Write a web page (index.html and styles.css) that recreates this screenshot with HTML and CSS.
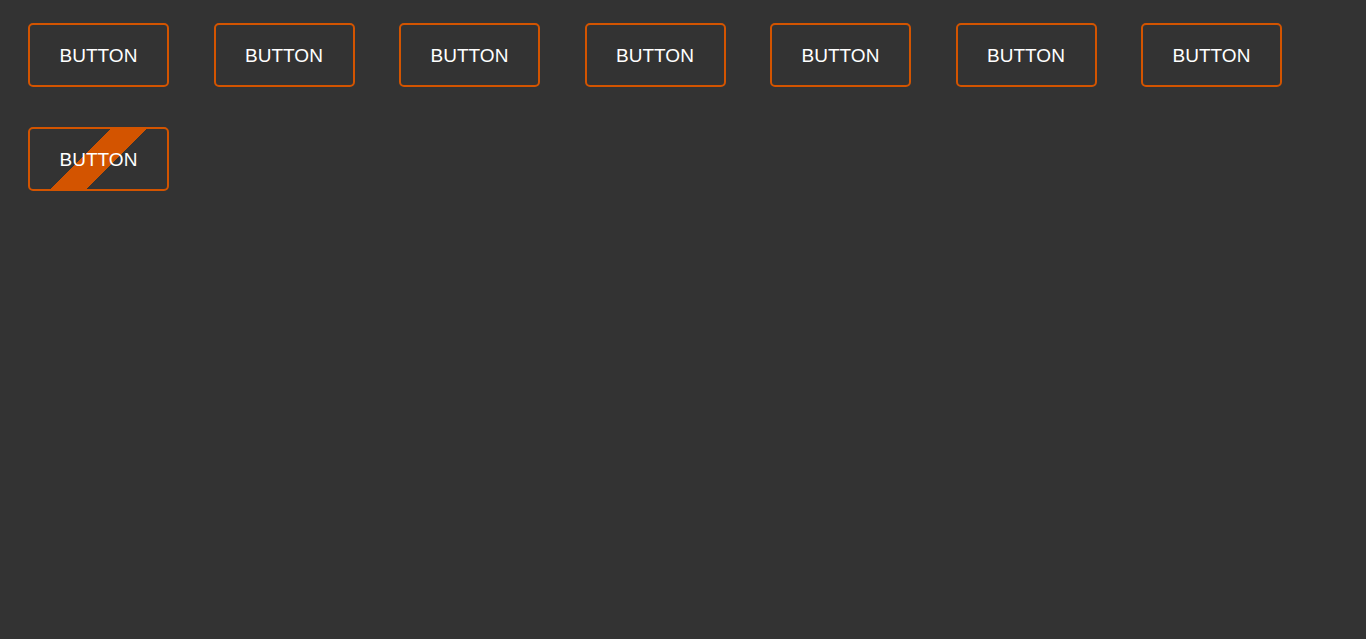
FILE: index.html
```html
<!DOCTYPE html>
<html>
<head>
<meta charset="utf-8">
<link rel="stylesheet" href="styles.css">
</head>
<body>
<div class="grid">
  <button class="btn">BUTTON</button>
  <button class="btn">BUTTON</button>
  <button class="btn">BUTTON</button>
  <button class="btn">BUTTON</button>
  <button class="btn">BUTTON</button>
  <button class="btn">BUTTON</button>
  <button class="btn">BUTTON</button>
  <button class="btn btn-striped">BUTTON</button>
</div>
</body>
</html>
```
FILE: styles.css
```css
html, body {
  margin: 0;
  padding: 0;
  background: #333333;
  height: 100%;
}
body {
  font-family: "Liberation Sans", Arial, sans-serif;
}
.grid {
  display: flex;
  flex-wrap: wrap;
  column-gap: 44.5px;
  row-gap: 40px;
  padding: 23px 28px;
  max-width: 1300px;
}
.btn {
  box-sizing: border-box;
  width: 141px;
  height: 64px;
  border: 2px solid #d35400;
  border-radius: 5px;
  background: transparent;
  color: #ffffff;
  font-family: "Liberation Sans", Arial, sans-serif;
  font-size: 19px;
  padding: 2px 0 0;
  margin: 0;
  cursor: pointer;
}
.btn-striped {
  background: linear-gradient(135deg,
    transparent calc(50% - 13px),
    #d35400 calc(50% - 13px),
    #d35400 calc(50% + 13px),
    transparent calc(50% + 13px));
}
```
